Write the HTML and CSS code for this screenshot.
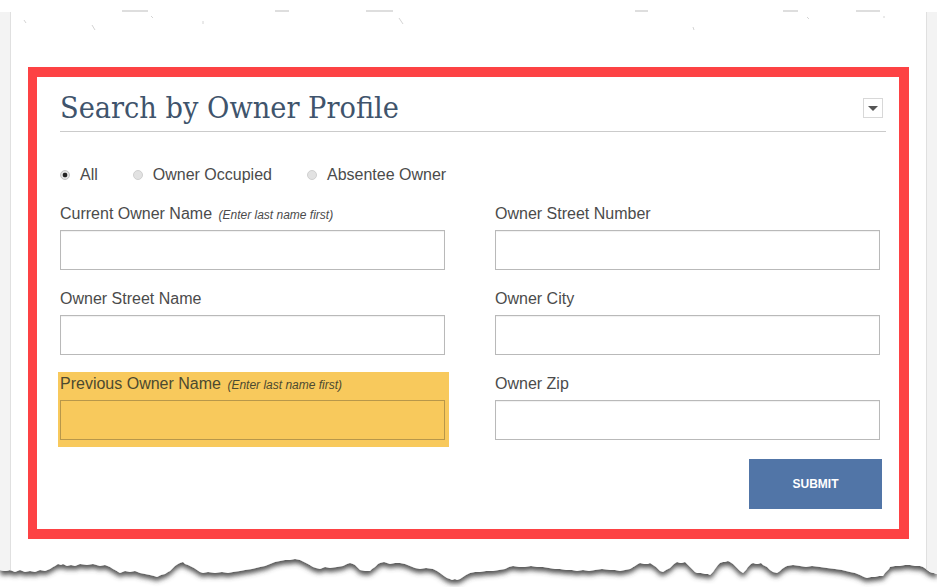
FILE: index.html
```html
<!DOCTYPE html>
<html lang="en">
<head>
    <meta charset="UTF-8">
    <meta name="viewport" content="width=device-width, initial-scale=1.0">
    <title>Search by Owner Profile</title>
    <link rel="stylesheet" href="styles.css">
</head>
<body>
    <svg class="top-edge" viewBox="0 0 937 12" aria-hidden="true">
        <g stroke="#c9c9c9" stroke-width="1.2">
            <line x1="122" y1="11" x2="148" y2="11"/>
            <line x1="275" y1="11" x2="289" y2="11"/>
            <line x1="366" y1="11" x2="393" y2="11"/>
            <line x1="635" y1="11" x2="648" y2="11"/>
            <line x1="783" y1="11" x2="798" y2="11"/>
            <line x1="856" y1="11" x2="880" y2="11"/>
        </g>
    </svg>

    <div class="page">
        <div class="sheet">
            <svg class="specks" viewBox="11 12 915 55" aria-hidden="true">
                <g stroke="#d4d4d4" stroke-width="1">
                    <line x1="24" y1="20" x2="26" y2="23"/>
                    <line x1="92" y1="25" x2="95" y2="30"/>
                    <line x1="151" y1="16" x2="153" y2="18"/>
                    <line x1="203" y1="21" x2="203" y2="24"/>
                    <line x1="399" y1="18" x2="403" y2="24"/>
                    <line x1="693" y1="27" x2="694" y2="30"/>
                    <line x1="807" y1="17" x2="809" y2="19"/>
                    <line x1="884" y1="16" x2="884" y2="18"/>
                </g>
            </svg>

            <section class="frame">
                <div class="panel-head">
                    <h2>Search by Owner Profile</h2>
                    <button class="toggle" type="button" aria-label="Collapse">
                        <svg viewBox="0 0 10 5" width="10" height="5"><path d="M0 0H10L5 5Z" fill="#555"/></svg>
                    </button>
                </div>

                <form class="owner-form">
                    <div class="radio-row">
                        <label class="radio"><input type="radio" name="occupancy" checked> All</label>
                        <label class="radio"><input type="radio" name="occupancy"> Owner Occupied</label>
                        <label class="radio"><input type="radio" name="occupancy"> Absentee Owner</label>
                    </div>

                    <div class="fields">
                        <div class="field">
                            <label for="current-owner">Current Owner Name <em>(Enter last name first)</em></label>
                            <input type="text" id="current-owner">
                        </div>
                        <div class="field">
                            <label for="street-number">Owner Street Number</label>
                            <input type="text" id="street-number">
                        </div>
                        <div class="field">
                            <label for="street-name">Owner Street Name</label>
                            <input type="text" id="street-name">
                        </div>
                        <div class="field">
                            <label for="owner-city">Owner City</label>
                            <input type="text" id="owner-city">
                        </div>
                        <div class="field highlight">
                            <label for="previous-owner">Previous Owner Name <em>(Enter last name first)</em></label>
                            <input type="text" id="previous-owner">
                        </div>
                        <div class="field">
                            <label for="owner-zip">Owner Zip</label>
                            <input type="text" id="owner-zip">
                        </div>
                    </div>

                    <div class="actions">
                        <button type="submit" class="submit">SUBMIT</button>
                    </div>
                </form>
            </section>
        </div>
    </div>

    <svg class="tear" viewBox="0 0 937 48" aria-hidden="true">
        <defs>
            <clipPath id="torn">
                <path d="M0 0V31L5 32L10 31L15 33L20 31L25 33L30 32L35 33L40 31L45 32L50 30L53 28L55 27L58 25L61 26L63 25L67 27L71 26L75 27L80 25L87 26L93 25L100 27L105 26L110 28L113 30L115 31L120 34L125 32L130 33L135 32L140 34L145 35L150 36L154 37L157 38L161 36L165 35L168 33L170 32L173 29L175 27L178 25L180 24L183 23L185 25L188 26L190 27L194 29L197 31L200 33L203 34L208 33L215 34L222 33L228 34L233 33L240 32L245 31L252 30L260 28L265 27L270 25L275 23L280 22L285 21L290 21L295 20L300 21L304 23L308 25L313 28L316 29L320 30L325 28L330 29L337 28L343 27L347 25L350 24L353 25L355 26L358 29L360 31L365 32L370 32L372 30L375 28L378 25L380 24L384 23L390 25L395 24L400 24L405 25L410 27L415 29L420 30L426 29L433 30L437 32L440 34L444 37L447 39L450 40L452 41L455 40L457 41L460 40L463 38L466 36L470 34L475 33L480 33L486 32L493 32L499 31L505 30L509 28L513 27L519 28L525 28L531 27L537 28L543 28L549 29L555 30L560 30L566 31L572 31L577 32L583 31L589 32L595 31L602 30L610 31L615 31L620 32L625 31L630 30L635 27L638 25L640 24L644 25L648 25L650 24L653 26L656 28L658 30L660 32L663 33L666 31L670 29L674 25L677 23L680 24L682 24L685 23L687 25L690 28L692 30L695 33L697 34L701 34L705 35L708 35L710 36L713 33L715 30L718 26L720 24L723 23L725 23L728 22L730 23L733 25L737 29L740 32L743 34L746 31L748 28L751 25L753 24L756 25L758 25L761 24L763 26L767 28L770 31L773 33L777 34L780 32L782 30L785 28L787 27L793 26L800 27L806 28L812 27L820 28L827 29L835 30L842 31L850 33L855 34L860 36L864 38L867 39L871 38L875 38L879 37L883 37L885 34L887 32L889 30L890 28L895 27L900 27L905 26L910 26L915 27L920 27L923 28L926 30L930 33L934 34L937 35V0Z"/>
            </clipPath>
            <filter id="tear-shadow" x="-5%" y="-20%" width="110%" height="180%">
                <feDropShadow dx="0" dy="4" stdDeviation="2.4" flood-color="#3f3f3f" flood-opacity="0.9"/>
            </filter>
        </defs>
        <g filter="url(#tear-shadow)">
            <g clip-path="url(#torn)">
                <rect x="0" y="0" width="937" height="48" fill="#fff"/>
                <rect x="0" y="0" width="10" height="48" fill="#f3f3f3"/>
                <rect x="10" y="0" width="1" height="48" fill="#e0e0e0"/>
                <rect x="926" y="0" width="1" height="48" fill="#e0e0e0"/>
                <rect x="927" y="0" width="10" height="48" fill="#f3f3f3"/>
            </g>
        </g>
    </svg>
</body>
</html>
```

FILE: styles.css
```css
:root {
    --frame-red: #fd4244;
    --title-color: #3f546c;
    --text-color: #4b4b4b;
    --input-border: #b9b9b9;
    --button-blue: #5175a7;
    --highlight: #f8c95c;
}

body {
    margin: 0;
    background-color: #fff;
    font-family: 'Liberation Sans', Arial, sans-serif;
    color: var(--text-color);
}

.top-edge {
    display: block;
    width: 937px;
    height: 12px;
}

.page {
    width: 937px;
    box-sizing: border-box;
    padding: 0 10px;
    background-color: #f3f3f3;
}

.sheet {
    background-color: #fff;
    border-left: 1px solid #e0e0e0;
    border-right: 1px solid #e0e0e0;
}

.specks {
    display: block;
    width: 915px;
    height: 55px;
}

.frame {
    margin: 0 17px;
    border: 10px solid var(--frame-red);
    border-left-width: 9px;
    padding: 0 13px 20px 23px;
}

.tear {
    display: block;
    width: 937px;
    height: 48px;
}

/* panel header */
.panel-head {
    display: flex;
    justify-content: space-between;
    align-items: center;
    padding: 13px 3px 5px 0;
    border-bottom: 1px solid #cbcbcb;
}

.panel-head h2 {
    margin: 0;
    font-family: 'DejaVu Serif', 'Liberation Serif', serif;
    font-stretch: condensed;
    font-weight: normal;
    font-size: 30.3px;
    line-height: 36px;
    color: var(--title-color);
}

.toggle {
    width: 20px;
    height: 20px;
    padding: 0;
    border: 1px solid #d8d8d8;
    background-color: #fff;
    display: flex;
    align-items: center;
    justify-content: center;
}

/* form */
.radio-row {
    display: flex;
    gap: 35px;
    margin-top: 33px;
    line-height: 20px;
    font-size: 16px;
}

.radio {
    display: flex;
    align-items: center;
    gap: 10px;
}

.radio input {
    appearance: none;
    margin: 0;
    width: 10px;
    height: 10px;
    border-radius: 50%;
    border: 1px solid #d0d0d0;
    background-color: #e2e2e2;
}

.radio input:checked {
    background: radial-gradient(circle, #222 0 2px, #e2e2e2 2.7px);
    border-color: #c4c4c4;
}

.fields {
    display: grid;
    grid-template-columns: 385px 385px;
    column-gap: 50px;
    row-gap: 19px;
    margin-top: 19px;
}

.field label {
    display: block;
    font-size: 16px;
    line-height: 20px;
    margin-bottom: 6px;
}

.field label em {
    font-size: 12px;
    line-height: 1;
    margin-left: 2px;
}

.field input {
    display: block;
    width: 100%;
    height: 40px;
    box-sizing: border-box;
    margin: 0;
    border: 1px solid var(--input-border);
    box-shadow: inset 0 1px 1px rgba(0,0,0,0.06);
    background-color: #fff;
    font-size: 16px;
}

.field.highlight {
    background-color: var(--highlight);
    padding: 2px 4px 7px 2px;
    margin: -2px -4px -7px -2px;
}

.field.highlight label {
    color: #4c4930;
}

.field.highlight input {
    background-color: transparent;
    border-color: #b8974a;
    box-shadow: none;
}

.actions {
    display: flex;
    justify-content: flex-end;
    margin-top: 19px;
    padding-right: 4px;
}

.submit {
    width: 133px;
    height: 50px;
    border: none;
    background-color: var(--button-blue);
    color: #fff;
    font-family: 'Liberation Sans', Arial, sans-serif;
    font-weight: bold;
    font-size: 12px;
    cursor: pointer;
}
```
